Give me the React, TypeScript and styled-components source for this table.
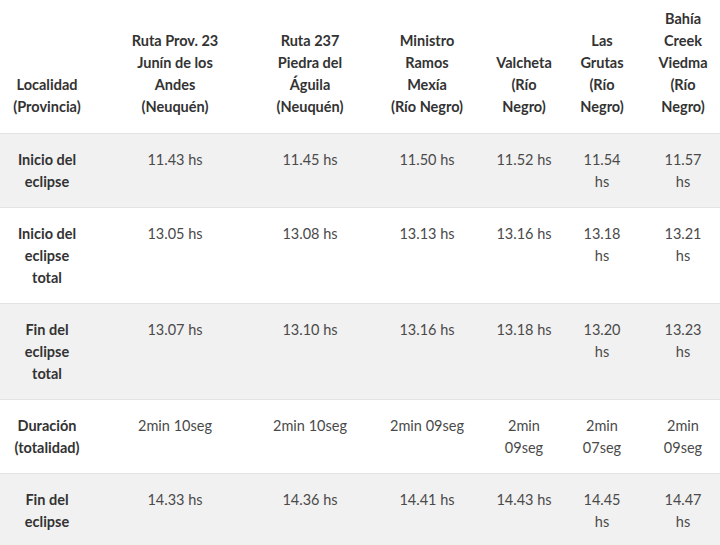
import React from 'react';
import styled, { createGlobalStyle } from 'styled-components';

const GlobalStyle = createGlobalStyle`
  html, body {
    margin: 0;
    padding: 0;
    background: #ffffff;
    overflow: hidden;
  }
  body {
    font-family: Lato, "Open Sans", "Liberation Sans", sans-serif;
    font-size: 14.5px;
    color: #444;
  }
`;

const columns = [94, 162, 108, 126, 68, 88, 74];

const headers = [
  'Localidad\n(Provincia)',
  'Ruta Prov. 23\nJunín de los\nAndes\n(Neuquén)',
  'Ruta 237\nPiedra del\nÁguila\n(Neuquén)',
  'Ministro\nRamos\nMexía\n(Río Negro)',
  'Valcheta\n(Río\nNegro)',
  'Las\nGrutas\n(Río\nNegro)',
  'Bahía\nCreek\nViedma\n(Río\nNegro)',
];

const rows = [
  ['Inicio del\neclipse', '11.43 hs', '11.45 hs', '11.50 hs', '11.52 hs', '11.54\nhs', '11.57\nhs'],
  ['Inicio del\neclipse\ntotal', '13.05 hs', '13.08 hs', '13.13 hs', '13.16 hs', '13.18\nhs', '13.21\nhs'],
  ['Fin del\neclipse\ntotal', '13.07 hs', '13.10 hs', '13.16 hs', '13.18 hs', '13.20\nhs', '13.23\nhs'],
  ['Duración\n(totalidad)', '2min 10seg', '2min 10seg', '2min 09seg', '2min\n09seg', '2min\n07seg', '2min\n09seg'],
  ['Fin del\neclipse', '14.33 hs', '14.36 hs', '14.41 hs', '14.43 hs', '14.45\nhs', '14.47\nhs'],
];

const Table = styled.table`
  width: 720px;
  table-layout: fixed;
  border-collapse: collapse;
  line-height: 22px;
  text-align: center;
`;

const HeadCell = styled.th`
  padding: 8px 0 15px;
  vertical-align: bottom;
  font-weight: 700;
  color: #333;
  white-space: pre-line;
`;

const Row = styled.tr<{ $shaded: boolean }>`
  background: ${p => (p.$shaded ? '#f1f1f1' : '#ffffff')};
  border-top: 1px solid #e3e3e3;
`;

const LabelCell = styled.th`
  padding: 15px 0 14px;
  vertical-align: top;
  font-weight: 700;
  color: #333;
  white-space: pre-line;
`;

const ValueCell = styled.td`
  padding: 15px 0 14px;
  vertical-align: top;
  color: #4a4a4a;
  white-space: pre-line;
`;

export default function App() {
  return <>
    <GlobalStyle/>
    <Table>
      <colgroup>
        {columns.map((w, i) => <col key={i} style={{width: w}}/>)}
      </colgroup>
      <thead>
        <tr>
          {headers.map(h => <HeadCell key={h}>{h}</HeadCell>)}
        </tr>
      </thead>
      <tbody>
        {rows.map((row, i) => <Row key={i} $shaded={i % 2 === 0}>
          <LabelCell>{row[0]}</LabelCell>
          {row.slice(1).map((v, j) => <ValueCell key={j}>{v}</ValueCell>)}
        </Row>)}
      </tbody>
    </Table>
  </>;
}
